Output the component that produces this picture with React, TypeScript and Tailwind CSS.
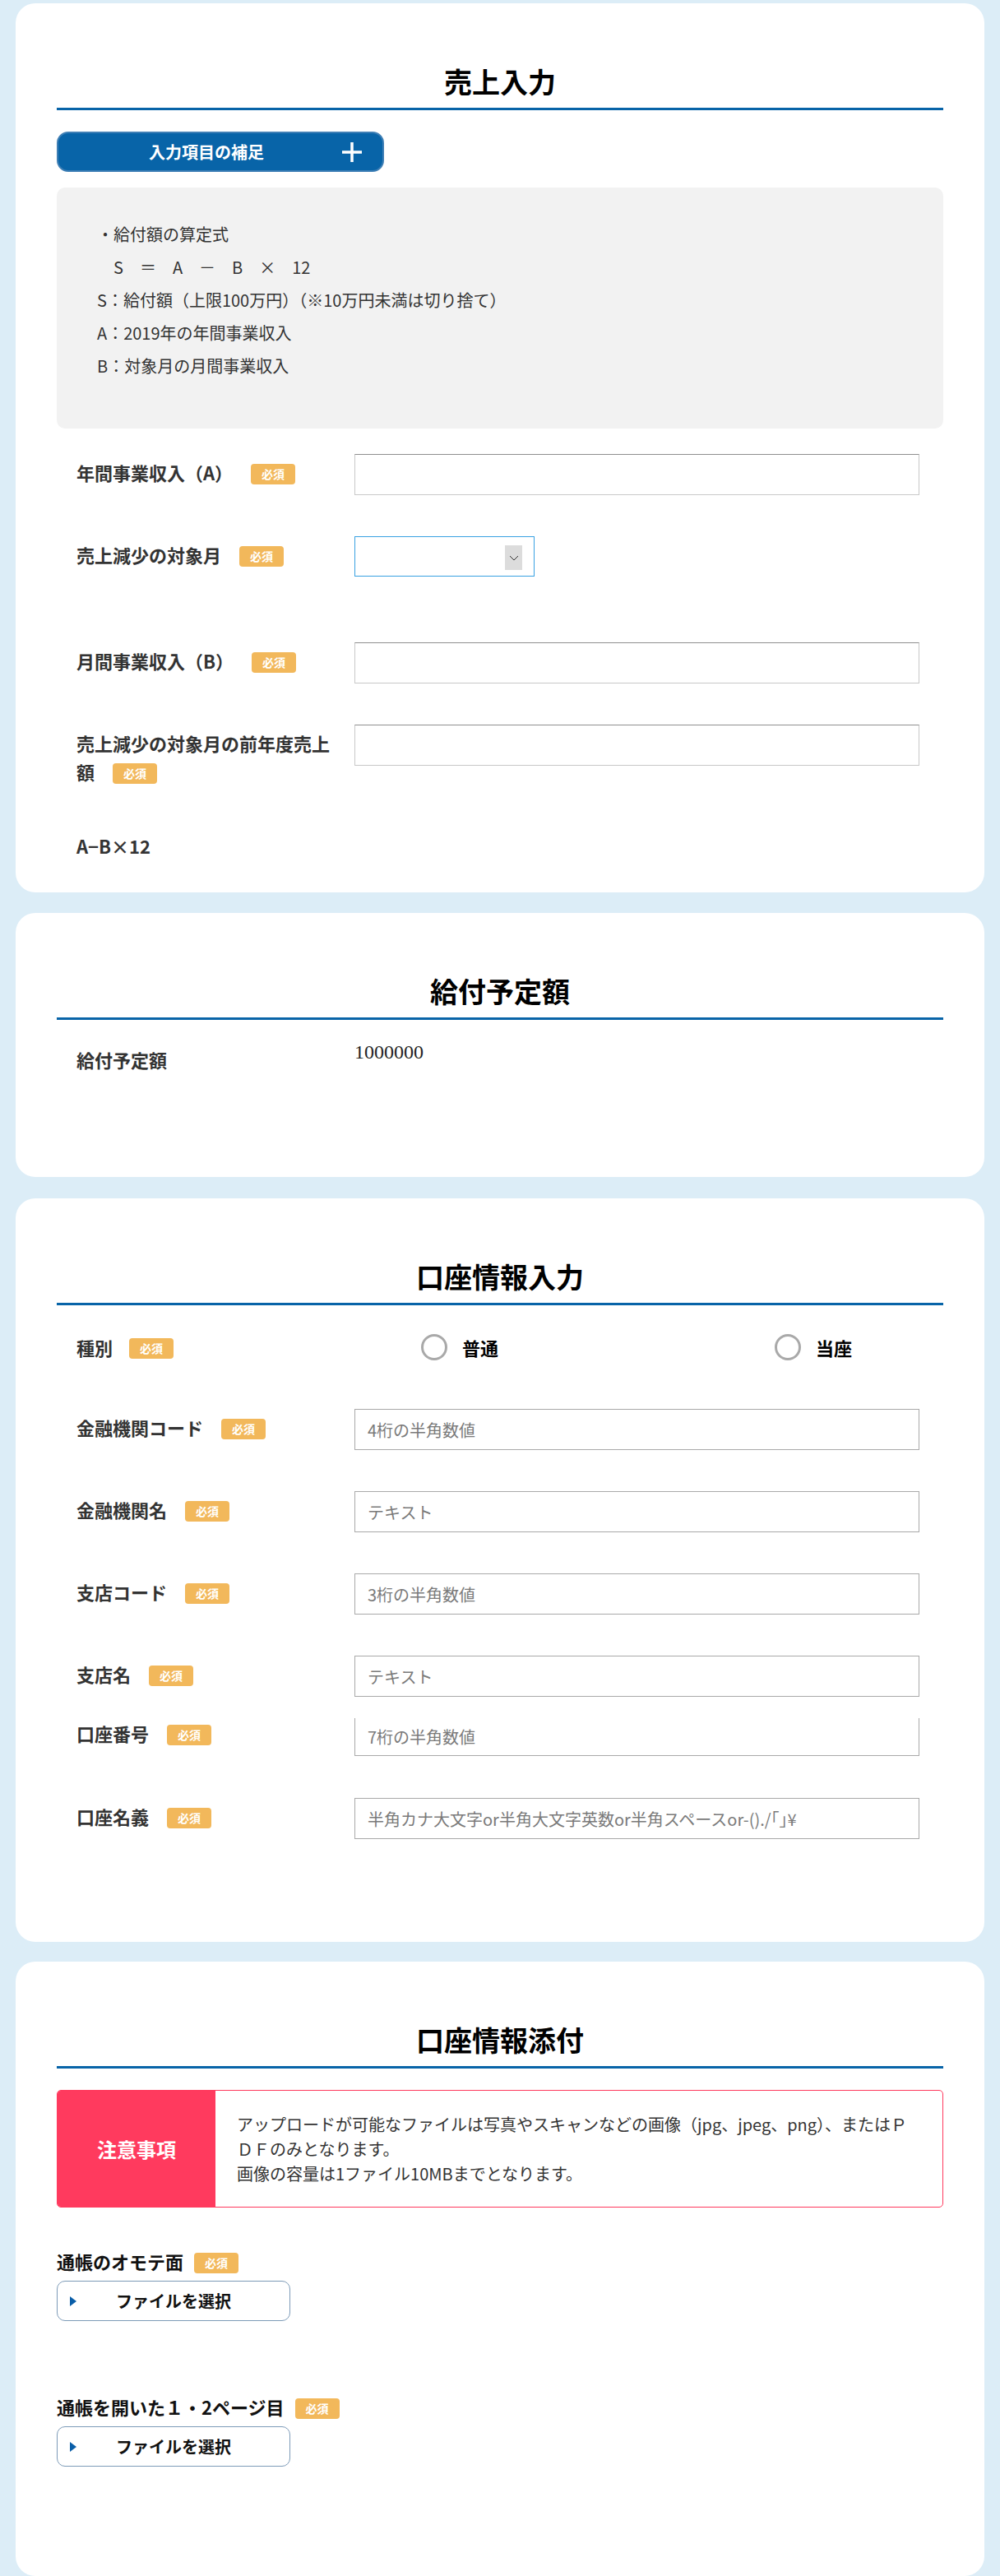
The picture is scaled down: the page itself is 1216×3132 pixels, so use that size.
import {ReactNode} from 'react'

const Badge = ({className = 'ml-[22px]'}: {className?: string}) => (
  <span
    className={`${className} inline-block w-[54px] h-[25px] leading-[25px] rounded-[4px] bg-[#f2b85b] text-center text-[14px] font-bold text-white align-middle relative top-[-2px]`}>
    必須
  </span>
)

const Heading = ({children}: {children: ReactNode}) => (
  <h2 className="pt-[73px] pb-[10px] border-b-[3px] border-[#0864a8] text-center text-[34px] leading-[44px] font-bold text-black">
    {children}
  </h2>
)

const Row = ({label, children, className = ''}: {label: ReactNode, children?: ReactNode, className?: string}) => (
  <div className={`flex items-start pl-[24px] pr-[29px] ${className}`}>
    <div className="w-[338px] shrink-0 pr-[16px] pt-[5px] text-[22px] leading-[35px] font-bold text-[#333]">
      {label}
    </div>
    <div className="flex-1">{children}</div>
  </div>
)

const TextInput = ({placeholder = '', variant = 'a', className = ''}: {placeholder?: string, variant?: 'a' | 'b', className?: string}) => (
  <input
    type="text"
    placeholder={placeholder}
    className={`block w-full h-[50px] px-[15px] text-[20px] bg-white outline-none placeholder:text-[#7a7a7a] ${
      variant === 'a' ? 'border border-[#c8c8c8] border-t-[#8f8f8f]' : 'border border-[#a9a9a9]'
    } ${className}`}
  />
)

const FileButton = () => (
  <button className="relative mt-[6px] flex items-center justify-center w-[284px] h-[49px] rounded-[10px] border-[1.5px] border-[#7d9bb8] bg-white text-[20px] font-bold text-[#111]">
    <span className="absolute left-[15px] top-1/2 -translate-y-1/2 w-0 h-0 border-y-[6px] border-y-transparent border-l-[8px] border-l-[#0a5ea8]"/>
    ファイルを選択
  </button>
)

const Radio = ({label}: {label: string}) => (
  <label className="flex items-center gap-[18px]">
    <span className="w-[32px] h-[32px] rounded-full border-[3px] border-[#a9a9a9] bg-white"/>
    <span className="text-[22px] font-bold text-black">{label}</span>
  </label>
)

export default function App() {
  return (
    <div className="min-h-screen bg-[#dcedf7] pt-[4px] pb-[40px] font-['Noto_Sans_CJK_JP',sans-serif]">
      {/* 売上入力 */}
      <section className="mx-[19px] rounded-[24px] bg-white px-[50px] pb-[39px]">
        <Heading>売上入力</Heading>

        <button className="relative mt-[26px] flex items-center w-[398px] h-[49px] rounded-[14px] border-2 border-[#3f7fb5] bg-[#0864a8] pl-[110px] text-[20px] font-bold text-white">
          入力項目の補足
          <svg className="absolute right-[24px] top-1/2 -translate-y-1/2" width="26" height="26" viewBox="0 0 26 26">
            <path d="M13 1v24M1 13h24" stroke="white" strokeWidth="3.5"/>
          </svg>
        </button>

        <div className="mt-[19px] rounded-[10px] bg-[#f2f2f2] pl-[49px] pt-[37px] pb-[56px] text-[20px] leading-[40px] text-[#333]">
          <div>・給付額の算定式</div>
          <div>　S　＝　A　－　B　×　12</div>
          <div>S：給付額（上限100万円）（※10万円未満は切り捨て）</div>
          <div>A：2019年の年間事業収入</div>
          <div>B：対象月の月間事業収入</div>
        </div>

        <Row className="mt-[31px]" label={<>年間事業収入（A）<Badge/></>}>
          <TextInput/>
        </Row>

        <Row className="mt-[50px]" label={<>売上減少の対象月<Badge/></>}>
          <div className="relative w-[219px] h-[49px] border border-[#3aa2e2] bg-white">
            <select className="w-full h-full appearance-none bg-transparent outline-none"/>
            <span className="absolute right-[14px] top-[10px] w-[21px] h-[30px] bg-[#dcdcdc] flex items-center justify-center">
              <svg width="12" height="7" viewBox="0 0 12 7">
                <path d="M1 1l5 5 5-5" fill="none" stroke="#333" strokeWidth="1"/>
              </svg>
            </span>
          </div>
        </Row>

        <Row className="mt-[80px]" label={<>月間事業収入（B）<Badge/></>}>
          <TextInput/>
        </Row>

        <Row className="mt-[50px]" label={<><span className="block">売上減少の対象月の前年度売上</span><span>額</span><Badge/></>}>
          <TextInput/>
        </Row>

        <Row className="mt-[50px]" label="A−B×12"/>
      </section>

      {/* 給付予定額 */}
      <section className="mx-[19px] mt-[25px] rounded-[24px] bg-white px-[50px] pb-[125px]">
        <Heading>給付予定額</Heading>
        <Row className="mt-[26px]" label="給付予定額">
          <div className="text-[24px] leading-[26px] text-[#222] font-['Liberation_Serif',serif]">1000000</div>
        </Row>
      </section>

      {/* 口座情報入力 */}
      <section className="mx-[19px] mt-[26px] rounded-[24px] bg-white px-[50px] pb-[125px]">
        <Heading>口座情報入力</Heading>

        <div className="mt-[26px] flex items-center h-[50px] pl-[24px] pr-[29px]">
          <div className="w-[338px] shrink-0 text-[22px] leading-[35px] font-bold text-[#333]">
            種別<Badge className="ml-[20px]"/>
          </div>
          <div className="w-[511px] pl-[81px]">
            <Radio label="普通"/>
          </div>
          <Radio label="当座"/>
        </div>

        <Row className="mt-[50px]" label={<>金融機関コード<Badge/></>}>
          <TextInput variant="b" placeholder="4桁の半角数値"/>
        </Row>
        <Row className="mt-[50px]" label={<>金融機関名<Badge/></>}>
          <TextInput variant="b" placeholder="テキスト"/>
        </Row>
        <Row className="mt-[50px]" label={<>支店コード<Badge/></>}>
          <TextInput variant="b" placeholder="3桁の半角数値"/>
        </Row>
        <Row className="mt-[50px]" label={<>支店名<Badge/></>}>
          <TextInput variant="b" placeholder="テキスト"/>
        </Row>
        <Row className="mt-[22px]" label={<>口座番号<Badge/></>}>
          <TextInput variant="b" placeholder="7桁の半角数値" className="mt-[4px] !h-[46px] border-t-0"/>
        </Row>
        <Row className="mt-[51px]" label={<>口座名義<Badge/></>}>
          <TextInput variant="b" placeholder="半角カナ大文字or半角大文字英数or半角スペースor-()./｢｣¥"/>
        </Row>
      </section>

      {/* 口座情報添付 */}
      <section className="mx-[19px] mt-[24px] rounded-[24px] bg-white px-[50px] pb-[133px]">
        <Heading>口座情報添付</Heading>

        <div className="mt-[26px] flex h-[143px] rounded-[5px] border border-[#ff3a5e] overflow-hidden">
          <div className="w-[192px] shrink-0 bg-[#ff3a5e] flex items-center justify-center text-[24px] font-bold text-white">
            注意事項
          </div>
          <div className="flex items-center pl-[26px] text-[20px] leading-[30px] text-[#333] whitespace-nowrap">
            <p>
              アップロードが可能なファイルは写真やスキャンなどの画像（jpg、jpeg、png）、またはＰ<br/>
              ＤＦのみとなります。<br/>
              画像の容量は1ファイル10MBまでとなります。
            </p>
          </div>
        </div>

        <div className="mt-[48px] text-[22px] leading-[35px] font-bold text-[#111]">
          通帳のオモテ面<Badge className="ml-[13px]"/>
        </div>
        <FileButton/>

        <div className="mt-[87px] text-[22px] leading-[35px] font-bold text-[#111]">
          通帳を開いた１・2ページ目<Badge className="ml-[13px]"/>
        </div>
        <FileButton/>
      </section>
    </div>
  )
}
